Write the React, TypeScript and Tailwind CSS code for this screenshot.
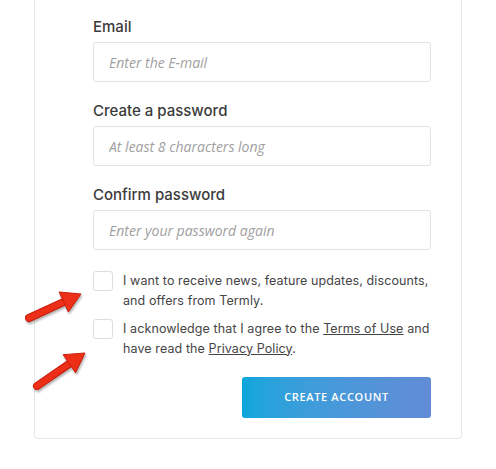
import React from 'react';

const fields = [
  { label: 'Email', placeholder: 'Enter the E-mail', type: 'email' },
  { label: 'Create a password', placeholder: 'At least 8 characters long', type: 'password' },
  { label: 'Confirm password', placeholder: 'Enter your password again', type: 'password' },
];

const Arrow: React.FC<{ tail: [number, number]; tip: [number, number] }> = ({ tail, tip }) => {
  const dx = tip[0] - tail[0];
  const dy = tip[1] - tail[1];
  const len = Math.hypot(dx, dy);
  const ux = dx / len;
  const uy = dy / len;
  const bx = tip[0] - ux * 19;
  const by = tip[1] - uy * 19;
  const nx = -uy;
  const ny = ux;
  const w1 = [bx + nx * 11, by + ny * 11];
  const w2 = [bx - nx * 11, by - ny * 11];
  return (
    <g>
      <line x1={tail[0]} y1={tail[1]} x2={bx + ux * 2} y2={by + uy * 2} stroke="#c81e0c" strokeWidth={8} strokeLinecap="round" />
      <line x1={tail[0]} y1={tail[1]} x2={bx + ux * 2} y2={by + uy * 2} stroke="#ee2f17" strokeWidth={6} strokeLinecap="round" />
      <polygon
        points={`${tip[0]},${tip[1]} ${w1[0]},${w1[1]} ${w2[0]},${w2[1]}`}
        fill="#ee2f17"
        stroke="#c81e0c"
        strokeWidth={1}
        strokeLinejoin="round"
      />
    </g>
  );
};

export default function App() {
  return (
    <div className="relative min-h-[469px] w-[496px] bg-white">
      <div className="ml-[34px] w-[428px] border-x border-b border-[#e6e6e6] rounded-b-[4px] pl-[58px] pr-[30px] pt-[16px] pb-[20px]">
        {fields.map((f, i) => (
          <div key={f.label} className={i > 0 ? 'mt-[18px]' : ''}>
            <label className="block h-[22px] leading-[22px] mb-[4px] text-[15px] font-medium text-[#3b3b3b] font-['Inter',sans-serif]">
              {f.label}
            </label>
            <input
              type={f.type}
              placeholder={f.placeholder}
              className="block w-[338px] h-[40px] rounded-[3px] border border-[#e3e3e3] px-[15px] text-[14px] italic font-['Open_Sans',sans-serif] placeholder:text-[#a0a0a0] outline-none"
            />
          </div>
        ))}

        <div className="mt-[21px] flex flex-col gap-[9px] text-[12.5px] tracking-[0.1px] leading-[19.5px] text-[#454545] font-['Inter',sans-serif]">
          <label className="flex items-start gap-[10px]">
            <span className="shrink-0 w-[20px] h-[20px] rounded-[3px] border border-[#dedede] bg-white" />
            <span>
              I want to receive news, feature updates, discounts,
              <br />
              and offers from Termly.
            </span>
          </label>
          <label className="flex items-start gap-[10px]">
            <span className="shrink-0 w-[20px] h-[20px] rounded-[3px] border border-[#dedede] bg-white" />
            <span>
              I acknowledge that I agree to the <span className="underline">Terms of Use</span> and
              <br />
              have read the <span className="underline">Privacy Policy</span>.
            </span>
          </label>
        </div>

        <div className="mt-[19px] flex justify-end">
          <button className="w-[189px] h-[41px] rounded-[3px] bg-gradient-to-r from-[#08a6dc] to-[#618bd7] text-white text-[11px] font-semibold tracking-[0.06em] font-['Open_Sans',sans-serif]">
            CREATE ACCOUNT
          </button>
        </div>
      </div>

      <svg
        className="absolute left-0 top-0 pointer-events-none drop-shadow-[1px_2px_1px_rgba(0,0,0,0.3)]"
        width={496}
        height={469}
      >
        <Arrow tail={[29, 318]} tip={[81, 294]} />
        <Arrow tail={[37, 386]} tip={[85, 353]} />
      </svg>
    </div>
  );
}
